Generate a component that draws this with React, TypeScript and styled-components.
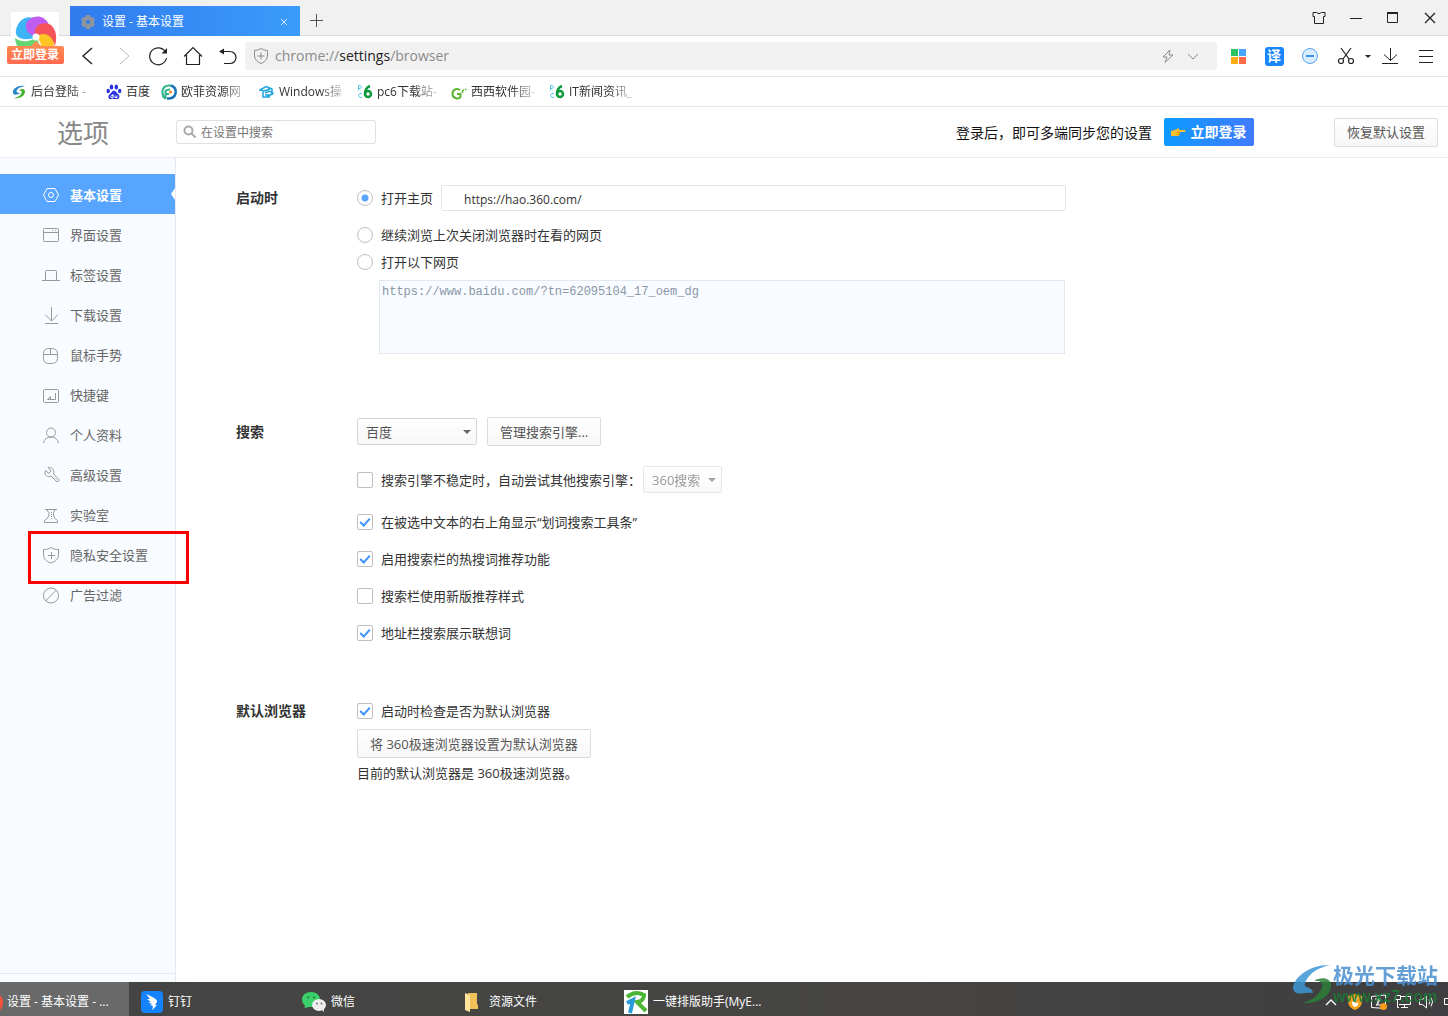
import React from "react";
import styled, { createGlobalStyle, css } from "styled-components";

const Global = createGlobalStyle`
  *, *::before, *::after { box-sizing: border-box; }
  body {
    margin: 0;
    background: #fff;
    color: #333;
    font: 13px/20px "Open Sans", "Noto Sans CJK SC", sans-serif;
  }
  button, input, select, textarea { font: inherit; color: inherit; margin: 0; }
  a { color: inherit; text-decoration: none; }
`;

const Window = styled.div`
  position: relative;
  display: flex;
  flex-direction: column;
  min-height: 100vh;
  overflow: hidden;
`;

/* ---------- title bar ---------- */

const TitleBar = styled.header`
  display: flex;
  align-items: flex-end;
  height: 36px;
  padding-left: 70px;
  background: #f1f1f1;
  border-bottom: 1px solid #dcdcdc;
`;

const Tab = styled.div`
  display: flex;
  align-items: center;
  gap: 6px;
  width: 230px;
  height: 30px;
  padding: 2px 9px 0 10px;
  margin-bottom: -1px;
  background: linear-gradient(90deg, #317bee, #3a9cfa);
  color: #fff;
  font-size: 12px;
`;

const TabTitle = styled.span`
  flex: 1;
`;

const PlainButton = styled.button`
  display: inline-flex;
  align-items: center;
  justify-content: center;
  padding: 0;
  border: 0;
  background: none;
  color: #222;
`;

const TabClose = styled(PlainButton)`
  width: 14px;
  height: 20px;
  color: #d5e6ff;
`;

const NewTab = styled(PlainButton)`
  width: 33px;
  height: 30px;
  color: #555;
`;

const WindowControls = styled.div`
  display: flex;
  align-self: stretch;
  margin-left: auto;
`;

const WindowButton = styled(PlainButton)`
  width: 37px;
`;

const Account = styled.a`
  position: absolute;
  top: 12px;
  left: 6px;
  display: flex;
  flex-direction: column;
  align-items: center;
  width: 58px;
`;

const AccountLogo = styled.span`
  display: flex;
  width: 48px;
  height: 34px;
  background: #fff;
  overflow: hidden;
`;

const AccountLabel = styled.span`
  width: 57px;
  height: 18px;
  border-radius: 2px;
  background: linear-gradient(#ff8a50, #ff6a50);
  color: #fff;
  font-size: 12px;
  font-weight: 700;
  line-height: 18px;
  text-align: center;
`;

/* ---------- toolbar ---------- */

const Toolbar = styled.nav`
  display: flex;
  align-items: center;
  height: 41px;
  padding: 0 4px 0 70px;
  border-bottom: 1px solid #e3e5e8;
`;

const ToolButton = styled(PlainButton)<{ $w?: number }>`
  flex: none;
  width: ${(p) => p.$w ?? 36}px;
  height: 32px;
`;

const AddressBar = styled.div`
  display: flex;
  flex: 1;
  align-items: center;
  gap: 6px;
  height: 28px;
  margin-right: 3px;
  padding: 0 18px 0 8px;
  border-radius: 2px;
  background: #f1f1f1;
  color: #8a8a8a;
`;

const Address = styled.span`
  flex: 1;
  font-size: 14px;
  b { color: #222; font-weight: 400; }
`;

const Translate = styled.span`
  width: 19px;
  height: 19px;
  border-radius: 3px;
  background: #1787fb;
  color: #fff;
  font-size: 14px;
  font-weight: 700;
  line-height: 18px;
`;

/* ---------- bookmarks ---------- */

const Bookmarks = styled.nav`
  display: flex;
  align-items: center;
  gap: 11px;
  height: 30px;
  padding-left: 11px;
  border-bottom: 1px solid #e3e5e8;
  font-size: 12px;
`;

const Bookmark = styled.a`
  display: flex;
  align-items: center;
  gap: 4px;
  svg { flex: none; }
`;

const BookmarkText = styled.span<{ $w: number; $fade: boolean }>`
  width: ${(p) => p.$w}px;
  overflow: hidden;
  white-space: nowrap;
  ${(p) => p.$fade && css`mask-image: linear-gradient(90deg, #000 60%, rgba(0, 0, 0, 0.2) 95%);`}
`;

/* ---------- page header ---------- */

const PageHeader = styled.header`
  display: flex;
  align-items: center;
  height: 51px;
  padding: 0 10px 0 0;
  border-bottom: 1px solid #eaedf1;
`;

const PageTitle = styled.h1`
  width: 176px;
  margin: 0;
  padding: 1px 0 0 57px;
  color: #888;
  font-size: 26px;
  font-weight: 400;
  line-height: 50px;
`;

const SearchBox = styled.label`
  display: flex;
  align-items: center;
  gap: 4px;
  width: 200px;
  height: 24px;
  padding-left: 6px;
  border: 1px solid #e0e0e0;
  border-radius: 2px;
  font-size: 12px;
  input {
    flex: 1;
    min-width: 0;
    padding: 2px 0 0;
    border: 0;
    outline: 0;
    background: none;
  }
  input::placeholder { color: #757575; opacity: 1; }
`;

const SyncHint = styled.p`
  margin: 0 12px 0 auto;
  padding-top: 1px;
  color: #111;
  font-size: 14px;
`;

const LoginButton = styled.button`
  display: flex;
  align-items: center;
  justify-content: center;
  gap: 4px;
  width: 90px;
  height: 28px;
  margin-right: 80px;
  padding: 0;
  border: 0;
  border-radius: 2px;
  background: linear-gradient(100deg, #0a9bff, #427aff);
  color: #fff;
  font-size: 14px;
  font-weight: 700;
`;

const Button = styled.button`
  height: 29px;
  padding: 0 12px;
  border: 1px solid #dcdcdc;
  border-radius: 2px;
  background: linear-gradient(#fff, #f7f7f7);
  color: #555;
  white-space: nowrap;
`;

/* ---------- body ---------- */

const Body = styled.div`
  display: flex;
  flex: 1;
`;

const Sidebar = styled.aside`
  display: flex;
  flex-direction: column;
  width: 176px;
  padding: 16px 0 8px;
  border-right: 1px solid #e6eaf0;
  background: #f8fbff;
`;

const SideLink = styled.a<{ $active?: boolean }>`
  position: relative;
  display: flex;
  align-items: center;
  gap: 10px;
  height: 40px;
  padding: 2px 0 0 42px;
  color: #666;
  svg { color: #999; }
  ${(p) =>
    p.$active &&
    css`
      background: #58a5ff;
      color: #fff;
      font-weight: 700;
      svg { color: #fff; }
      &::after {
        content: "";
        position: absolute;
        right: 0;
        top: 14px;
        border: 6px solid transparent;
        border-left: 0;
        border-right: 4px solid #fff;
      }
    `}
`;

const Highlight = styled.span`
  position: absolute;
  z-index: 1;
  top: -3px;
  left: 28px;
  width: 161px;
  height: 53px;
  border: 3px solid #fb0000;
`;

const SideFooter = styled.div`
  margin-top: auto;
  border-top: 1px solid #e6eaf0;
`;

const Main = styled.main`
  display: flex;
  flex: 1;
  flex-direction: column;
  padding: 27px 60px 0;
`;

const Section = styled.section<{ $gap?: number }>`
  display: grid;
  grid-template-columns: 121px minmax(0, 709px);
  margin-bottom: ${(p) => p.$gap ?? 0}px;
`;

const SectionTitle = styled.h2<{ $h?: number }>`
  margin: 0;
  color: #333;
  font-size: 14px;
  font-weight: 700;
  line-height: ${(p) => p.$h ?? 26}px;
`;

const Row = styled.div<{ $top?: number; $gap?: number }>`
  display: flex;
  align-items: center;
  gap: ${(p) => p.$gap ?? 8}px;
  min-height: 26px;
  margin-top: ${(p) => p.$top ?? 0}px;
`;

const Choice = styled.label`
  display: flex;
  align-items: center;
  gap: 8px;
  white-space: nowrap;
`;

const Radio = styled.input`
  appearance: none;
  flex: none;
  width: 16px;
  height: 16px;
  border: 1px solid #bfbfbf;
  border-radius: 50%;
  background: #fff;
  &:checked { background: radial-gradient(circle, #58a5ff 3px, #fff 4px); }
`;

const Check = styled.input`
  appearance: none;
  display: grid;
  flex: none;
  width: 16px;
  height: 16px;
  border: 1px solid #bfbfbf;
  border-radius: 2px;
  background: #fff;
  &:checked::after {
    content: "";
    place-self: center;
    width: 6px;
    height: 10px;
    margin-top: -3px;
    border: solid #3b94ff;
    border-width: 0 2px 2px 0;
    transform: rotate(42deg);
  }
`;

const HomeInput = styled.input`
  flex: 1;
  min-width: 0;
  height: 26px;
  padding: 2px 22px 0;
  border: 1px solid #e3e3e3;
  border-radius: 2px;
  background: #fff;
  font-size: 12px;
`;

const UrlArea = styled.textarea`
  display: block;
  width: calc(100% - 23px);
  height: 74px;
  margin: 5px 0 0 22px;
  padding: 1px 2px;
  border: 1px solid #e3e8ee;
  border-radius: 0;
  background: #f8fbff;
  color: #8a97a8;
  font: 12px/20px "Liberation Mono", monospace;
  resize: none;
`;

const SelectWrap = styled.span<{ $w: number; $disabled?: boolean }>`
  position: relative;
  display: flex;
  width: ${(p) => p.$w}px;
  height: 27px;
  opacity: ${(p) => (p.$disabled ? 0.6 : 1)};
  select {
    appearance: none;
    width: 100%;
    padding: 0 8px;
    border: 1px solid #d6d6d6;
    border-radius: 2px;
    background: linear-gradient(#fff, #f7f7f7);
    color: #555;
    opacity: 1;
  }
  &::after {
    content: "";
    position: absolute;
    top: 12px;
    right: 6px;
    border: 4px solid transparent;
    border-top-color: #666;
    border-bottom: 0;
  }
`;

const Note = styled.p`
  margin: 5px 0 0;
`;

/* ---------- taskbar ---------- */

const Taskbar = styled.footer`
  display: flex;
  align-items: stretch;
  height: 34px;
  background: linear-gradient(90deg, #444, #464543 60%, #3f3e40);
  color: #fff;
  font-size: 12px;
`;

const TaskItem = styled.button<{ $active?: boolean }>`
  display: flex;
  align-items: center;
  gap: ${(p) => (p.$active ? 4 : 5)}px;
  width: ${(p) => (p.$active ? 129 : 161)}px;
  padding: 6px 0 0 ${(p) => (p.$active ? 0 : 12)}px;
  border: 0;
  background: ${(p) => (p.$active ? "#69696a" : "none")};
  color: #fff;
  white-space: nowrap;
  svg { flex: none; }
`;

const Tray = styled.div`
  display: flex;
  align-items: center;
  margin-left: auto;
  padding-top: 5px;
`;

const TrayButton = styled(PlainButton)`
  width: 24px;
  color: #fff;
`;

const TrayEdge = styled.span`
  display: flex;
  width: 9px;
  padding-left: 4px;
`;

const Watermark = styled.div`
  position: absolute;
  right: 10px;
  bottom: 9px;
  display: flex;
  align-items: center;
  opacity: 0.85;
  pointer-events: none;
`;

const WatermarkText = styled.div`
  display: flex;
  flex-direction: column;
  color: #4a8fd0;
  font-size: 21px;
  font-weight: 700;
  line-height: 24px;
  white-space: nowrap;
  small { color: #1c7a35; font: 700 16px/20px "Liberation Sans", sans-serif; }
`;

/* ---------- icons ---------- */

type IconProps = { w?: number; h?: number; sw?: number; children: React.ReactNode };

const Icon = ({ w = 18, h = w, sw = 1, children }: IconProps) => (
  <svg width={w} height={h} viewBox={`0 0 ${w} ${h}`} fill="none" stroke="currentColor" strokeWidth={sw} aria-hidden="true">
    {children}
  </svg>
);

const BrandLogo = () => (
  <svg width="48" height="48" viewBox="0 0 48 48" aria-hidden="true">
    <path d="M25 25C13 30 3 26 5 18C7 8 15 3 22 6C15 10 15 19 25 25Z" fill="#3db4f5" />
    <path d="M15 12C19 3 33 1 38 13C31 10 24 14 25 25C17 22 14 18 15 12Z" fill="#c05cf0" />
    <path d="M25 25C20 15 31 8 40 13C46 19 46 26 44 34C41 24 33 20 25 25Z" fill="#f4545a" />
    <path d="M25 25C33 18 43 24 43 34C38 41 31 43 26 43C32 36 31 30 25 25Z" fill="#ffc524" />
    <path d="M25 25C29 31 29 40 23 44C13 44 5 37 4 26C11 31 19 30 25 25Z" fill="#66d672" />
    <circle cx="25" cy="25" r="3.500" fill="#fff" />
    <path d="M20 34L25 29L30 34Z" fill="#ff8a50" />
  </svg>
);

const ShieldPlus = () => (
  <Icon>
    <path d="M9 1.500C7 3 4.500 3.500 1.500 3.500V9C1.500 13 4.500 15.500 9 17C13.500 15.500 16.500 13 16.500 9V3.500C13.500 3.500 11 3 9 1.500ZM9.500 6V13M6 9.500H13" />
  </Icon>
);

const Pc6Icon = () => (
  <svg width="16" height="16" viewBox="0 0 16 16" fill="none" aria-hidden="true">
    <path d="M1.500 6.500V1.500H3.500Q5.500 2.500 3.500 4.500H1.500M5 9.500Q1.500 9 1.500 11.500Q2 14 5 13.500" stroke="#58c4ec" />
    <path d="M13 2Q8 4 8 10" stroke="#0c9a3c" strokeWidth="2.500" />
    <ellipse cx="11" cy="10" rx="3" ry="3" stroke="#0c9a3c" strokeWidth="2.500" />
  </svg>
);

const bookmarks: { text: string; w: number; fade: boolean; icon: React.ReactNode }[] = [
  {
    text: "后台登陆 -", w: 64, fade: true,
    icon: (
      <svg width="16" height="16" viewBox="0 0 16 16" aria-hidden="true">
        <path d="M14 2C7 1 1 5 2 9C3 12 7 10 9 10C8 8 4 9 6 6C8 3 11 3 14 2Z" fill="#2387c8" />
        <path d="M3 14C9 15 14 12 14 7C13 4 10 5 8 6C10 7 12 7 10 10C8 13 6 13 3 14Z" fill="#43b02f" />
      </svg>
    ),
  },
  {
    text: "百度", w: 24, fade: false,
    icon: (
      <svg width="16" height="16" viewBox="0 0 16 16" fill="#2932e1" aria-hidden="true">
        <ellipse cx="5.500" cy="3" rx="1.800" ry="2.500" /><ellipse cx="10.300" cy="3" rx="1.800" ry="2.500" />
        <ellipse cx="2.200" cy="7" rx="1.700" ry="2.200" /><ellipse cx="13.700" cy="7" rx="1.700" ry="2.200" />
        <path d="M8 6.500C10 6.500 10.500 9 12 10C15 12 13 16 10 15H6C2.500 16 1 12.500 4 10C5.500 9 6 6.500 8 6.500Z" />
        <path d="M7 10V14H5.500Q4 12.500 5.500 11.500H7M9 11.500V13.500H11V11.500" fill="none" stroke="#fff" />
      </svg>
    ),
  },
  {
    text: "欧菲资源网", w: 67, fade: true,
    icon: (
      <svg width="16" height="16" viewBox="0 0 16 16" fill="none" aria-hidden="true">
        <path d="M4 14.500Q1 12 1.500 7Q2.500 1.500 8 1.500H10M4.500 15V7.500Q5 5.500 9 5.500M4 10H8" stroke="#2eb48a" strokeWidth="2" />
        <path d="M10 1.500C17 4 16 14 8 14.500H6" stroke="#1b74b8" strokeWidth="2.500" />
        <circle cx="9.500" cy="8" r="1.500" fill="#f58220" />
      </svg>
    ),
  },
  {
    text: "Windows操", w: 67, fade: true,
    icon: (
      <svg width="16" height="16" viewBox="0 0 16 16" fill="none" stroke="#1ea5dc" strokeWidth="1.500" aria-hidden="true">
        <path d="M1 6L7 2.500L12 4.500L5 7ZM4 7V13H11M6 9L10 7L14 9L11 11H6M8 12L14 10M13 5V8" />
      </svg>
    ),
  },
  { text: "pc6下载站-", w: 63, fade: true, icon: <Pc6Icon /> },
  {
    text: "西西软件园-", w: 67, fade: true,
    icon: (
      <svg width="16" height="16" viewBox="0 0 16 16" fill="none" stroke="#5cb531" strokeWidth="2" aria-hidden="true">
        <path d="M9 6C5 3.500 1.500 6 1.500 10C1.500 15 8 15.500 9.500 13V10H6" />
        <path d="M11.500 9Q11 6 13 6M14 5L15.500 6" strokeWidth="1.500" />
      </svg>
    ),
  },
  { text: "IT新闻资讯_", w: 67, fade: true, icon: <Pc6Icon /> },
];

const sideItems: { text: string; icon: React.ReactNode; active?: boolean; marked?: boolean }[] = [
  { text: "基本设置", active: true, icon: <Icon><path d="M5 2.500H13L16.500 9L13 15.500H5L1.500 9Z" /><circle cx="9" cy="9" r="2.500" /></Icon> },
  { text: "界面设置", icon: <Icon><rect x="1.500" y="2.500" width="15" height="13" rx="1" /><path d="M1.500 6.500H16.500M10 4.500H11M13 4.500H14" /></Icon> },
  { text: "标签设置", icon: <Icon><path d="M0 14.500H4M3.500 14.500V5.500Q3.500 4.500 4.500 4.500H13.500Q14.500 4.500 14.500 5.500V14.500M3.500 14.500H18" /></Icon> },
  { text: "下载设置", icon: <Icon><path d="M9.500 1V15M3 8.500L9.500 15L16 8.500M3 17.500H16" /></Icon> },
  { text: "鼠标手势", icon: <Icon><rect x="1.500" y="2.500" width="14" height="15" rx="5" /><path d="M1.500 8.500H15.500M8.500 2.500V8.500" /></Icon> },
  { text: "快捷键", icon: <Icon><rect x="1.500" y="3.500" width="15" height="13" rx="1" /><path d="M13.500 7V13.500H5.500L8.500 10.500V13" /></Icon> },
  { text: "个人资料", icon: <Icon><circle cx="9" cy="6.500" r="4.500" /><path d="M1.500 17Q3 11 9 11Q15 11 16.500 17" /></Icon> },
  { text: "高级设置", icon: <Icon><path d="M6 1.500L9 5L7 7.500L3.500 4.500C1.500 9 6 12 9 10L14 15C16 16.500 18 14.500 16.500 13L11.500 8C13 4 10 1 6 1.500Z" /><path d="M13.500 12.500L14.500 13.500" /></Icon> },
  { text: "实验室", icon: <Icon><path d="M3 3.500H15M5.500 3.500V5L7 6.500V9Q6 13 2.500 14.500V16.500H15.500V14.500Q12 13 11.500 9V6.500L12.500 5V3.500" /><path d="M9.500 6V14" strokeDasharray="1 1" /></Icon> },
  { text: "隐私安全设置", marked: true, icon: <ShieldPlus /> },
  { text: "广告过滤", icon: <Icon><circle cx="9" cy="9.500" r="7.500" /><path d="M3.500 15L14.500 4" /></Icon> },
];

const tasks: { text: string; icon: React.ReactNode }[] = [
  {
    text: "钉钉",
    icon: (
      <svg width="22" height="22" viewBox="0 0 22 22" aria-hidden="true">
        <rect width="22" height="22" rx="4" fill="#1482fa" />
        <path d="M5 3C11 6 17 8 16 11L14 14H16L11 19L12 15L9 14L11 13L7 11L10 11L6 8L9 8Z" fill="#fff" />
      </svg>
    ),
  },
  {
    text: "微信",
    icon: (
      <svg width="24" height="22" viewBox="0 0 24 22" aria-hidden="true">
        <path d="M9 1C4 1 0 4 0 8.500C0 11 1 13 3 14.500L2.500 17.500L6 16Q18 17 18 8.500C18 4 14 1 9 1Z" fill="#3cd06a" />
        <ellipse cx="17" cy="14" rx="7" ry="6" fill="#eee" /><path d="M19 18L22 21L22 17Z" fill="#eee" />
        <g fill="#2a6b3e"><circle cx="6" cy="6.500" r="1" /><circle cx="12" cy="6.500" r="1" /></g>
        <g fill="#777"><circle cx="15" cy="12.500" r="1" /><circle cx="19.500" cy="12.500" r="1" /></g>
      </svg>
    ),
  },
  {
    text: "资源文件",
    icon: (
      <svg width="21" height="20" viewBox="0 0 21 20" aria-hidden="true">
        <path d="M5 1H14V12L15 13V17H5Z" fill="#f0c258" /><path d="M2 1L7 3V20L2 18Z" fill="#ffe49a" />
      </svg>
    ),
  },
  {
    text: "一键排版助手(MyE...",
    icon: (
      <svg width="24" height="24" viewBox="0 0 24 24" fill="none" aria-hidden="true">
        <rect width="24" height="24" fill="#fff" />
        <path d="M3 7Q11 0 20 5Q20 11 13 12Q17 16 22 21" stroke="#4bb535" strokeWidth="4" />
        <path d="M3 13L9 10L6 23" stroke="#2a9bd8" strokeWidth="4" />
      </svg>
    ),
  },
];

const searchOptions = [
  { text: "在被选中文本的右上角显示“划词搜索工具条”", checked: true, top: 16 },
  { text: "启用搜索栏的热搜词推荐功能", checked: true, top: 11 },
  { text: "搜索栏使用新版推荐样式", checked: false, top: 11 },
  { text: "地址栏搜索展示联想词", checked: true, top: 11 },
];

export default function App() {
  return (
    <Window>
      <Global />
      <TitleBar>
        <Tab>
          <svg width="16" height="16" viewBox="0 0 16 16" aria-hidden="true">
            <circle cx="8" cy="8" r="4" fill="none" stroke="#8f959e" strokeWidth="4" />
            <path d="M8 1V4M8 12V15M2 4.500L4.500 6M11.500 10L14 11.500M2 11.500L4.500 10M11.500 6L14 4.500" stroke="#8f959e" strokeWidth="4" />
          </svg>
          <TabTitle>设置 - 基本设置</TabTitle>
          <TabClose aria-label="关闭标签"><Icon w={8}><path d="M1 1L7 7M7 1L1 7" /></Icon></TabClose>
        </Tab>
        <NewTab aria-label="新标签"><Icon w={13}><path d="M6.500 0V13M0 6.500H13" /></Icon></NewTab>
        <WindowControls>
          <WindowButton aria-label="皮肤"><Icon w={14}><path d="M1 1.500H4.500Q7 4 9.500 1.500H13V5.500H11.500V12.500H2.500V5.500H1Z" /></Icon></WindowButton>
          <WindowButton aria-label="最小化"><Icon w={12}><path d="M0 6.500H12" /></Icon></WindowButton>
          <WindowButton aria-label="最大化"><Icon w={11}><path d="M.5 1V10.500H10.500V1" /><path d="M0 1H11" strokeWidth="2" /></Icon></WindowButton>
          <WindowButton aria-label="关闭"><Icon w={12}><path d="M1 1L11 11M11 1L1 11" strokeWidth="1.300" /></Icon></WindowButton>
        </WindowControls>
      </TitleBar>

      <Toolbar>
        <ToolButton $w={35} aria-label="后退"><Icon sw={1.400}><path d="M13 1L4 9L13 17" /></Icon></ToolButton>
        <ToolButton $w={35} aria-label="前进"><Icon sw={1}><path d="M6 1L15 9L6 17" stroke="#bbb" /></Icon></ToolButton>
        <ToolButton $w={35} aria-label="刷新"><Icon w={20} sw={1.200}><path d="M17.500 6A8.500 8.500 0 1 0 18.500 12" /><path d="M19 2V7.500H13.500Z" fill="currentColor" stroke="none" /></Icon></ToolButton>
        <ToolButton $w={35} aria-label="主页"><Icon w={20} sw={1.200}><path d="M1 10.500L10 1.500L19 10.500M3.500 9V18.500H16.500V9" /></Icon></ToolButton>
        <ToolButton $w={35} aria-label="恢复"><Icon sw={1.200}><path d="M3 4.500H11A6 6 0 0 1 11 16.500H5" /><path d="M0 4.500L5 1.500V7.500Z" fill="currentColor" stroke="none" /></Icon></ToolButton>
        <AddressBar>
          <Icon w={16}><path d="M8 .5Q5 2.500 1.500 2.500V8Q2 13 8 15.500Q14 13 14.500 8V2.500Q11 2.500 8 .5ZM8 4.500V11.500M4.500 8H11.500" /></Icon>
          <Address>chrome://<b>settings</b>/browser</Address>
          <Icon w={14}><path d="M9 1L2 8H6L4 13.500L12 6H8Z" /></Icon>
          <Icon w={18}><path d="M7 7L12 12L17 7" /></Icon>
        </AddressBar>
        <ToolButton aria-label="应用">
          <svg width="15" height="15" viewBox="0 0 15 15" aria-hidden="true">
            <path fill="#2cc264" d="M0 0H7V7H0Z" /><path fill="#45a5ff" d="M8 0H15V7H8Z" />
            <path fill="#ffac17" d="M0 8H7V15H0Z" /><path fill="#ff6a45" d="M8 8H15V15H8Z" />
          </svg>
        </ToolButton>
        <ToolButton><Translate>译</Translate></ToolButton>
        <ToolButton aria-label="拦截">
          <svg width="18" height="18" viewBox="0 0 18 18" aria-hidden="true">
            <circle cx="9" cy="9" r="7.500" fill="#d9ebff" stroke="#58a5f5" /><path d="M5 9H13" stroke="#3c94f0" strokeWidth="2" />
          </svg>
        </ToolButton>
        <ToolButton aria-label="截图"><Icon w={18} sw={1.200}><path d="M4 1L12 12M14 1L6 12" /><circle cx="4" cy="14" r="2.500" /><circle cx="14" cy="14" r="2.500" /></Icon></ToolButton>
        <ToolButton $w={8} aria-label="截图选项"><Icon w={6}><path d="M0 2H6L3 5Z" fill="currentColor" stroke="none" /></Icon></ToolButton>
        <ToolButton aria-label="下载"><Icon w={16} h={18}><path d="M8.500 1V13.500M2 7.500L8.500 13.500L15 7.500M0 16.500H16" /></Icon></ToolButton>
        <ToolButton aria-label="菜单"><Icon w={14}><path d="M0 1.500H14M0 7.500H14M0 13.500H14" /></Icon></ToolButton>
      </Toolbar>

      <Account href="#login">
        <AccountLogo><BrandLogo /></AccountLogo>
        <AccountLabel>立即登录</AccountLabel>
      </Account>

      <Bookmarks>
        {bookmarks.map((b) => (
          <Bookmark href="#bookmark" key={b.text}>
            {b.icon}
            <BookmarkText $w={b.w} $fade={b.fade}>{b.text}</BookmarkText>
          </Bookmark>
        ))}
      </Bookmarks>

      <PageHeader>
        <PageTitle>选项</PageTitle>
        <SearchBox>
          <Icon w={14} sw={2}><g stroke="#aaa"><circle cx="5.500" cy="5.500" r="4" /><path d="M8.500 8.500L12.500 12.500" /></g></Icon>
          <input type="text" placeholder="在设置中搜索" aria-label="在设置中搜索" />
        </SearchBox>
        <SyncHint>登录后，即可多端同步您的设置</SyncHint>
        <LoginButton>
          <svg width="15" height="12" viewBox="0 0 15 12" aria-hidden="true">
            <path d="M0 5L4 4L8 2L8 4H14Q15 5 14 6H9L9 8Q8 11 5 10H2L0 10Z" fill="#fbc02d" /><path d="M6 6.500H9M6 8.500H9" stroke="#d98c12" />
          </svg>
          立即登录
        </LoginButton>
        <Button>恢复默认设置</Button>
      </PageHeader>

      <Body>
        <Sidebar>
          {sideItems.map((s) => (
            <SideLink href="#section" key={s.text} $active={s.active}>
              {s.icon}
              {s.text}
              {s.marked && <Highlight />}
            </SideLink>
          ))}
          <SideFooter />
        </Sidebar>

        <Main>
          <Section $gap={63}>
            <SectionTitle>启动时</SectionTitle>
            <div>
              <Row>
                <Choice><Radio type="radio" name="startup" defaultChecked />打开主页</Choice>
                <HomeInput type="text" aria-label="主页" defaultValue="https://hao.360.com/" />
              </Row>
              <Row $top={11}><Choice><Radio type="radio" name="startup" />继续浏览上次关闭浏览器时在看的网页</Choice></Row>
              <Row $top={1}><Choice><Radio type="radio" name="startup" />打开以下网页</Choice></Row>
              <UrlArea aria-label="网页列表" spellCheck={false} defaultValue="https://www.baidu.com/?tn=62095104_17_oem_dg" />
            </div>
          </Section>

          <Section $gap={52}>
            <SectionTitle $h={29}>搜索</SectionTitle>
            <div>
              <Row $gap={10}>
                <SelectWrap $w={120}>
                  <select aria-label="搜索引擎"><option>百度</option></select>
                </SelectWrap>
                <Button>管理搜索引擎...</Button>
              </Row>
              <Row $top={20} $gap={2}>
                <Choice><Check type="checkbox" />搜索引擎不稳定时，自动尝试其他搜索引擎：</Choice>
                <SelectWrap $w={79} $disabled>
                  <select aria-label="备用搜索引擎" disabled><option>360搜索</option></select>
                </SelectWrap>
              </Row>
              {searchOptions.map((o) => (
                <Row $top={o.top} key={o.text}>
                  <Choice><Check type="checkbox" defaultChecked={o.checked} />{o.text}</Choice>
                </Row>
              ))}
            </div>
          </Section>

          <Section>
            <SectionTitle>默认浏览器</SectionTitle>
            <div>
              <Row><Choice><Check type="checkbox" defaultChecked />启动时检查是否为默认浏览器</Choice></Row>
              <Row $top={5}><Button>将 360极速浏览器设置为默认浏览器</Button></Row>
              <Note>目前的默认浏览器是 360极速浏览器。</Note>
            </div>
          </Section>
        </Main>
      </Body>

      <Taskbar>
        <TaskItem $active>
          <svg width="3" height="18" viewBox="0 0 3 18" aria-hidden="true"><path d="M0 2Q3 5 3 9Q3 14 0 17Z" fill="#f4503c" /></svg>
          设置 - 基本设置 - ...
        </TaskItem>
        {tasks.map((t) => (
          <TaskItem key={t.text}>{t.icon}{t.text}</TaskItem>
        ))}
        <Tray>
          <TrayButton aria-label="更多"><Icon w={12} sw={1.400}><path d="M1 9L6 4L11 9" /></Icon></TrayButton>
          <TrayButton aria-label="安全">
            <svg width="14" height="16" viewBox="0 0 14 16" aria-hidden="true">
              <path d="M7 0L14 2V8Q13 14 7 16Q1 14 0 8V2Z" fill="#f7a21b" /><path d="M10 3Q4 6 4 10Q5 13 7 13Q11 12 10 8Q8 10 7 9Q8 6 10 3Z" fill="#fff" />
            </svg>
          </TrayButton>
          <TrayButton aria-label="输入">
            <Icon w={16}><path d="M.5 2.500L14.500 1V14.500L.5 13.500ZM4 5H10L5 11H10M7 5V11" /><circle cx="12.500" cy="12.500" r="3.500" fill="#f79a1b" stroke="none" /></Icon>
          </TrayButton>
          <TrayButton aria-label="网络"><Icon w={16}><path d="M5 2.500H15.500V10.500H4M9.500 10.500V14M6 13.500H13M.5 1.500V5.500H5.500V1.500ZM2.500 5.500V13.500H4" /></Icon></TrayButton>
          <TrayButton aria-label="音量"><Icon w={16}><path d="M.5 5.500H3.500L7.500 2V14L3.500 10.500H.5ZM10 5.500Q11.500 8 10 10.500M12 3.500Q15 8 12 12.500" /></Icon></TrayButton>
          <TrayEdge><Icon w={5} h={8}><path d="M5 .5H1.500V6.500H5" /></Icon></TrayEdge>
        </Tray>
      </Taskbar>

      <Watermark>
        <svg width="43" height="42" viewBox="0 0 43 42" aria-hidden="true">
          <path d="M40 1C22 0 4 12 3 24C4 33 16 28 23 29C22 20 10 27 17 15C22 7 31 3 40 1Z" fill="#3d97d6" />
          <path d="M13 39C31 40 42 30 41 20C39 12 28 14 24 17C32 16 35 21 29 29C25 34 19 37 13 39Z" fill="#2c7f37" />
        </svg>
        <WatermarkText>极光下载站<small>www.xz7.com</small></WatermarkText>
      </Watermark>
    </Window>
  );
}
